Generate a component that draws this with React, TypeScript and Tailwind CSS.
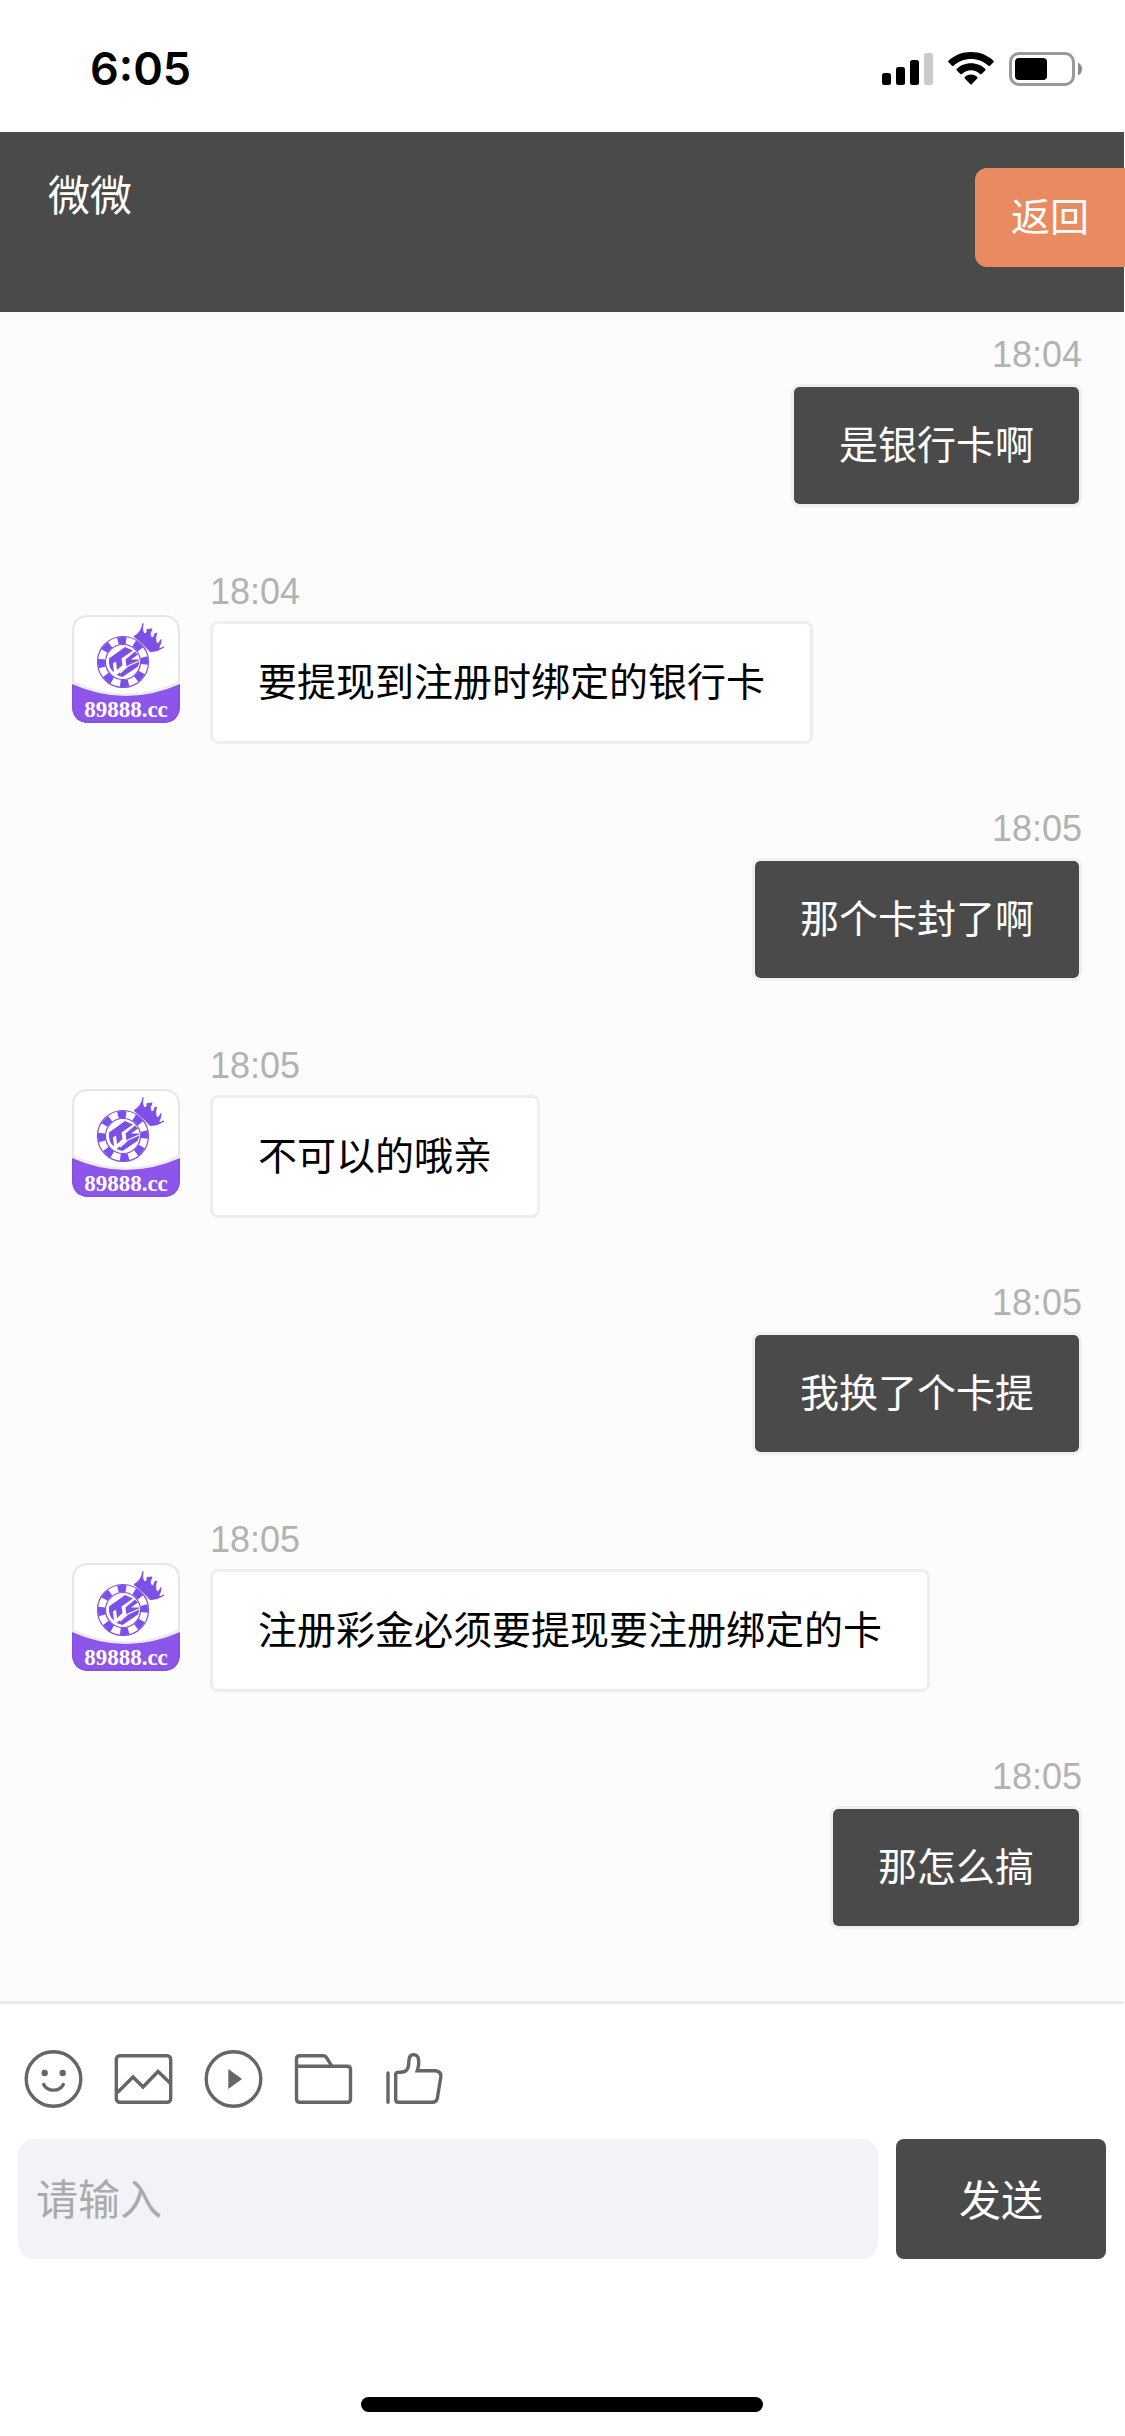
import { useState, FormEvent, ReactNode } from "react";

interface Message {
  id: number;
  from: "me" | "agent";
  time: string;
  text: string;
}

const initialMessages: Message[] = [
  { id: 1, from: "me", time: "18:04", text: "是银行卡啊" },
  { id: 2, from: "agent", time: "18:04", text: "要提现到注册时绑定的银行卡" },
  { id: 3, from: "me", time: "18:05", text: "那个卡封了啊" },
  { id: 4, from: "agent", time: "18:05", text: "不可以的哦亲" },
  { id: 5, from: "me", time: "18:05", text: "我换了个卡提" },
  { id: 6, from: "agent", time: "18:05", text: "注册彩金必须要提现要注册绑定的卡" },
  { id: 7, from: "me", time: "18:05", text: "那怎么搞" },
];

function StatusBar() {
  return (
    <div className="h-[132px] pt-1.5 pl-[90px] pr-[43px] flex items-center justify-between bg-white">
      <span className="font-['Inter',sans-serif] font-semibold text-[45px] leading-[48px] text-black">6:05</span>
      <div className="flex items-center gap-[15px]">
        {/* Signal */}
        <svg className="w-[51px] h-[34px]" viewBox="0 0 51 34">
          <rect x="0" y="21" width="9" height="12" rx="2.5" />
          <rect x="14" y="15" width="9" height="18" rx="2.5" />
          <rect x="28" y="8" width="9" height="25" rx="2.5" />
          <rect x="42" y="1" width="9" height="32" rx="2.5" fill="#cbcbcb" />
        </svg>
        {/* Wifi */}
        <svg className="w-[46px] h-[34px]" viewBox="0 0 46 34">
          <path d="M23 0C32 0 40 3.400 45.500 8.800Q46.200 9.600 45.500 10.300L42 13.800Q41.300 14.500 40.500 13.800C35.800 9.500 29.700 7 23 7S10.200 9.500 5.500 13.800Q4.700 14.500 4 13.800L.5 10.300Q-.2 9.600.5 8.800C6 3.400 14 0 23 0Z" />
          <path d="M23 11.200C28.800 11.200 33.800 13.400 37.200 16.800Q38 17.600 37.200 18.400L33.600 22Q32.900 22.600 32.100 22C29.700 19.700 26.500 18.300 23 18.300S16.300 19.700 13.900 22Q13.100 22.600 12.400 22L8.800 18.400Q8 17.600 8.800 16.800C12.200 13.400 17.200 11.200 23 11.200Z" />
          <path d="M23 22.500C25.600 22.500 27.800 23.500 29.200 24.900Q30 25.800 29.200 26.600L23.700 32.300Q23 33 22.300 32.300L16.800 26.600Q16 25.800 16.800 24.900C18.200 23.500 20.400 22.500 23 22.500Z" />
        </svg>
        {/* Battery */}
        <svg className="w-[73px] h-[34px]" viewBox="0 0 73 34">
          <rect x="1.500" y="1.500" width="63" height="31" rx="8.500" fill="none" stroke="#999" strokeWidth="3" />
          <rect x="6" y="6" width="32" height="22" rx="4" />
          <path d="M69 10.500Q73 12.500 73 17T69 23.500Z" fill="#8a8a8a" />
        </svg>
      </div>
    </div>
  );
}

function AgentAvatar() {
  return (
    <svg className="w-[108px] h-[108px] shrink-0" viewBox="0 0 108 108" role="img" aria-label="89888.cc">
      <defs>
        <clipPath id="avatar-clip">
          <rect width="108" height="108" rx="16" />
        </clipPath>
      </defs>
      <g clipPath="url(#avatar-clip)">
        <rect width="108" height="108" fill="#fff" />
        <path d="M0 67Q54 93 108 67" fill="none" stroke="#ececec" strokeWidth="3" />
        <path d="M0 69Q54 93 108 69V108H0Z" fill="#8d55ea" />
      </g>
      <path d="M1 69V17Q1 1 17 1H91Q107 1 107 17V69" fill="none" stroke="#e6e6e6" strokeWidth="2" />
      <path d="M1 70V91Q1 107 17 107H91Q107 107 107 91V70" fill="none" stroke="#8450de" strokeWidth="1.500" />
      {/* Crown */}
      <path
        d="M62 21.500Q69 18 71 8.500Q70 16 72 18.500Q75.500 19 75 14.500L80 14Q77 19 79 22Q82 24 82.500 19L84.500 18Q83 23 84 26.500Q84 29.500 86.500 28.500L89 24.500Q89.500 28 87 32Q86 35 92 32Q85 37 78 36.500Q71 28 62 21.500Z"
        fill="#7c4fe6"
        stroke="#7c4fe6"
        strokeWidth="1"
        strokeLinejoin="round"
      />
      {/* Chip */}
      <circle cx="51" cy="47" r="25.500" fill="#fff" stroke="#7c4fe6" strokeWidth="1.200" />
      <circle
        cx="51"
        cy="47"
        r="21.500"
        fill="none"
        stroke="#7c4fe6"
        strokeWidth="7"
        strokeDasharray="8.443 8.443"
        strokeDashoffset="4.200"
        transform="rotate(-4.500 51 47)"
      />
      <circle cx="51" cy="47" r="17.500" fill="#fff" stroke="#7c4fe6" strokeWidth="1.200" />
      <path
        d="M37 43.500L53 32L61 35.500L49.500 43.500L50.500 50L45 55L44 46.500L41 48.500L42 57.500Q36 53 37 43.500Z"
        fill="#7c4fe6"
      />
      <path
        d="M63 36.500L66 39.500L59 44.500H67Q67.500 48 66 51.500L50.500 62L44.500 60L54.500 52L53.500 44.500Z"
        fill="#7c4fe6"
      />
      <path d="M67 46L56 51L48 58" fill="none" stroke="#fff" strokeWidth="1.200" />
      <text x="54" y="102" textAnchor="middle" fill="#fff" fontFamily="Liberation Serif, serif" fontWeight="700" fontSize="23">
        89888.cc
      </text>
    </svg>
  );
}

function MessageRow({ message }: { message: Message }) {
  if (message.from === "me") {
    return (
      <li className="flex flex-col items-end">
        <time className="text-[36px] leading-[58px] text-[#b2b2b2]">{message.time}</time>
        <p className="px-[45px] py-8 border-3 border-[#f0f0f0] rounded-lg bg-[#4a4a4a] bg-clip-padding text-white text-[39px] leading-[53px]">
          {message.text}
        </p>
      </li>
    );
  }

  return (
    <li className="flex items-start gap-[30px]">
      <div className="pt-[52px]">
        <AgentAvatar />
      </div>
      <div className="flex flex-col items-start">
        <time className="text-[36px] leading-[58px] text-[#b2b2b2]">{message.time}</time>
        <p className="px-[45px] py-8 border-3 border-[#eeeeee] rounded-lg bg-white text-black text-[39px] leading-[53px]">
          {message.text}
        </p>
      </div>
    </li>
  );
}

function ToolButton({ label, children }: { label: string; children: ReactNode }) {
  return (
    <button type="button" aria-label={label} className="cursor-pointer">
      <svg
        className="w-[60px] h-[60px]"
        viewBox="0 0 60 60"
        fill="none"
        stroke="#666"
        strokeWidth="3.400"
        strokeLinejoin="round"
      >
        {children}
      </svg>
    </button>
  );
}

function Toolbar() {
  return (
    <div className="px-1.5 flex gap-[30px]">
      <ToolButton label="表情">
        <circle cx="29.500" cy="30" r="27.300" />
        <circle cx="20.700" cy="24" r="3.200" fill="#666" stroke="none" />
        <circle cx="38.700" cy="24" r="3.200" fill="#666" stroke="none" />
        <path d="M19.700 35.500C23.500 43 35.500 43 39.300 35.500" strokeLinecap="round" />
      </ToolButton>
      <ToolButton label="图片">
        <rect x="2.300" y="6.700" width="54.400" height="46.600" rx="3.500" />
        <path d="M3.500 43.500L19 28L29 38L44 22.500L56 34" strokeLinejoin="miter" />
      </ToolButton>
      <ToolButton label="视频">
        <circle cx="29.500" cy="30" r="27.300" />
        <path d="M24.300 20V40L38 30Z" fill="#666" stroke="none" />
      </ToolButton>
      <ToolButton label="文件">
        <path d="M2.500 17.300V10Q2.500 6.700 5.800 6.700H29Q31.500 6.700 32.700 8.800L38 17.300" />
        <path d="M2.500 17.300H53.200Q56.500 17.300 56.500 20.600V50Q56.500 53.300 53.200 53.300H5.800Q2.500 53.300 2.500 50Z" />
      </ToolButton>
      <ToolButton label="评价">
        <path d="M4 24V53.300" strokeLinecap="round" />
        <path d="M11.700 25.500Q11.700 23.400 13.800 23.400C20.500 23.400 24 22.500 24.700 15C25 11 24.700 5.600 29.300 5.600C34.500 5.600 34.800 10 34.700 14.500Q34.700 17.500 33.200 21.700H51.500Q57.500 22.500 56.800 28L53.300 49.500Q52.300 53.300 48.500 53.300H14.500Q11.700 53.300 11.700 50.500Z" strokeLinejoin="miter" />
      </ToolButton>
    </div>
  );
}

export default function App() {
  const [messages, setMessages] = useState<Message[]>(initialMessages);
  const [draft, setDraft] = useState("");

  const handleSend = (e: FormEvent) => {
    e.preventDefault();
    const text = draft.trim();
    if (!text) return;

    const time = new Date().toTimeString().slice(0, 5);
    setMessages([...messages, { id: messages.length + 1, from: "me", time, text }]);
    setDraft("");
  };

  return (
    <div className="min-h-screen flex flex-col bg-white font-['Liberation_Sans','Noto_Sans_CJK_SC',sans-serif]">
      <StatusBar />

      <header className="mr-px h-[180px] pl-12 flex items-start justify-between bg-[#4a4a4a] text-white">
        <h1 className="pt-[35px] text-[42px] leading-[60px]">微微</h1>
        <button
          type="button"
          className="mt-9 -mr-px px-9 h-[99px] rounded-l-xl bg-[#ea8a60] text-[39px] leading-[53px] cursor-pointer"
        >
          返回
        </button>
      </header>

      <main className="mr-px flex-1 pt-3.5 pb-[72px] pl-[72px] pr-[42px] bg-[#fcfcfc]">
        <ul className="flex flex-col gap-14">
          {messages.map((message) => (
            <MessageRow key={message.id} message={message} />
          ))}
        </ul>
      </main>

      <footer className="mr-px border-t-3 border-[#ebebeb] pt-[45px] px-[18px] pb-6 flex flex-col bg-white">
        <Toolbar />
        <form onSubmit={handleSend} className="mt-[30px] flex gap-[18px]">
          <input
            type="text"
            aria-label="请输入"
            placeholder="请输入"
            value={draft}
            onChange={(e) => setDraft(e.target.value)}
            className="flex-1 min-w-0 h-[120px] pt-1 px-[18px] rounded-2xl bg-[#f2f3f8] text-[42px] text-black placeholder:text-[#aaaaaa] focus:outline-hidden"
          />
          <button
            type="submit"
            className="w-[210px] h-[120px] pt-1 rounded-lg bg-[#4a4a4a] text-white text-[42px] cursor-pointer"
          >
            发送
          </button>
        </form>
        {/* Home indicator */}
        <div className="mt-[138px] mx-auto w-[402px] h-[15px] rounded-full bg-black" />
      </footer>
    </div>
  );
}
